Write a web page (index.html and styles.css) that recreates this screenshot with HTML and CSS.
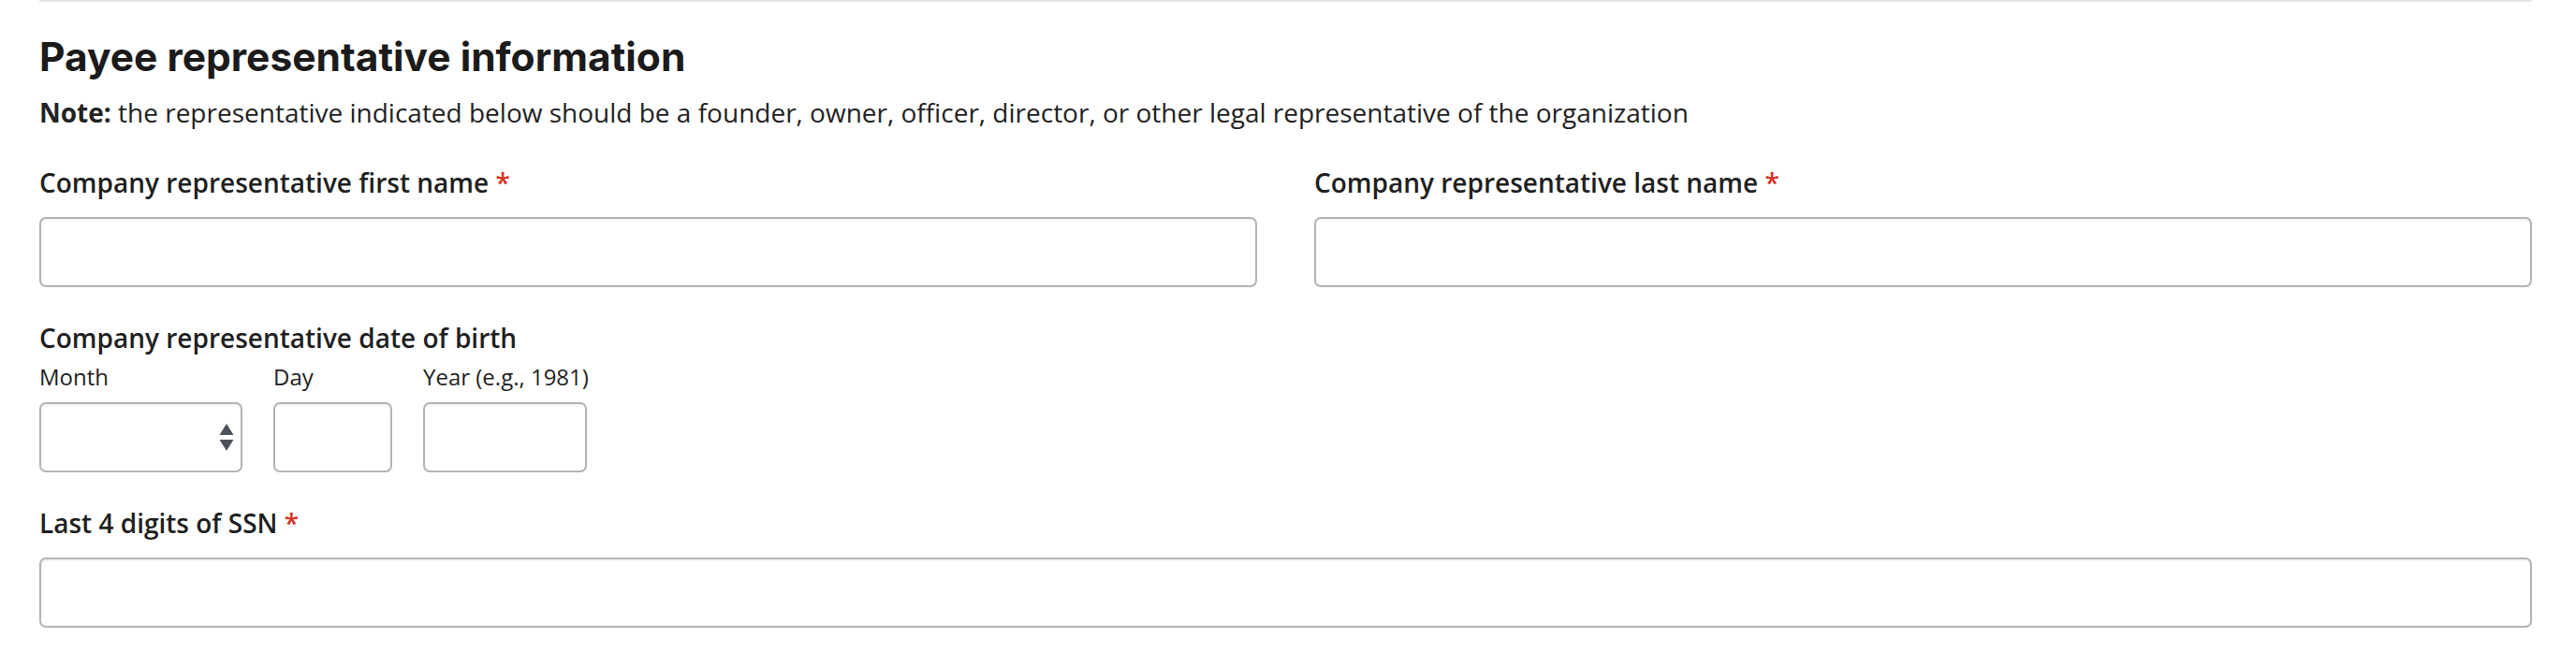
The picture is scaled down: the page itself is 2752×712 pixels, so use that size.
FILE: index.html
```html
<!DOCTYPE html>
<html lang="en">
<head>
<meta charset="utf-8">
<title>Payee representative information</title>
<link rel="stylesheet" href="styles.css">
</head>
<body>
<section class="section">
  <h2 class="title">Payee representative information</h2>
  <p class="note"><strong>Note:</strong> the representative indicated below should be a founder, owner, officer, director, or other legal representative of the organization</p>

  <div class="row two">
    <div class="field">
      <label class="label" for="fn">Company representative first name <span class="req">*</span></label>
      <input class="input" id="fn" type="text">
    </div>
    <div class="field">
      <label class="label" for="ln">Company representative last name <span class="req">*</span></label>
      <input class="input" id="ln" type="text">
    </div>
  </div>

  <div class="row">
    <div class="label">Company representative date of birth</div>
    <div class="dob">
      <div class="dob-field month">
        <label class="sublabel" for="m">Month</label>
        <div class="select-wrap">
          <select class="input select" id="m"><option></option></select>
          <svg class="arrows" width="16" height="30" viewBox="0 0 16 30" aria-hidden="true">
            <path d="M8 0 L15.5 12 L0.5 12 Z" fill="#4b525b"/>
            <path d="M0.5 17 L15.5 17 L8 29 Z" fill="#4b525b"/>
          </svg>
        </div>
      </div>
      <div class="dob-field day">
        <label class="sublabel" for="d">Day</label>
        <input class="input" id="d" type="text">
      </div>
      <div class="dob-field year">
        <label class="sublabel" for="y">Year (e.g., 1981)</label>
        <input class="input" id="y" type="text">
      </div>
    </div>
  </div>

  <div class="row">
    <div class="field">
      <label class="label" for="ssn">Last 4 digits of SSN <span class="req">*</span></label>
      <input class="input" id="ssn" type="text">
    </div>
  </div>
</section>
</body>
</html>
```

FILE: styles.css
```css
html, body {
  margin: 0;
  padding: 0;
  background: #ffffff;
}

body {
  font-family: "Open Sans", "Liberation Sans", sans-serif;
  color: #1f1f1f;
}

.section {
  margin-left: 42px;
  width: 2663px;
  border-top: 2px solid #e5e5e5;
  box-sizing: border-box;
}

.title {
  font-family: Inter, "Liberation Sans", sans-serif;
  font-weight: 700;
  font-size: 42.5px;
  line-height: 44px;
  margin: 37px 0 0 0;
  color: #1b1b1b;
  letter-spacing: 0;
}

.note {
  font-size: 28px;
  line-height: 32px;
  margin: 21px 0 0 0;
  color: #222;
}

.note strong {
  font-weight: 700;
}

.row {
  margin-top: 41px;
}

.row + .row {
  margin-top: 36px;
}

.two {
  display: grid;
  grid-template-columns: 1fr 1fr;
  column-gap: 61px;
}

.field {
  display: flex;
  flex-direction: column;
}

.label {
  display: block;
  font-size: 28px;
  line-height: 36px;
  font-weight: 600;
  color: #1f1f1f;
}

.req {
  color: #d6321f;
}

.field .label {
  margin-bottom: 19px;
}

.input {
  display: block;
  box-sizing: border-box;
  width: 100%;
  height: 75px;
  margin: 0;
  padding: 0 16px;
  border: 2px solid #b4b4b4;
  border-radius: 7px;
  background: #ffffff;
  box-shadow: inset 0 2px 2px rgba(0, 0, 0, 0.05);
  font-family: "Open Sans", "Liberation Sans", sans-serif;
  font-size: 24px;
  outline: none;
}

.dob {
  display: flex;
  gap: 33px;
  margin-top: 8px;
}

.dob-field {
  display: flex;
  flex-direction: column;
}

.month { width: 217px; }
.day { width: 127px; }
.year { width: 175px; }

.sublabel {
  font-size: 24px;
  line-height: 32px;
  font-weight: 400;
  color: #1f1f1f;
  margin-bottom: 11px;
  white-space: nowrap;
}

.select-wrap {
  position: relative;
}

.select {
  -webkit-appearance: none;
  appearance: none;
}

.arrows {
  position: absolute;
  right: 9px;
  top: 23px;
  pointer-events: none;
}
```
